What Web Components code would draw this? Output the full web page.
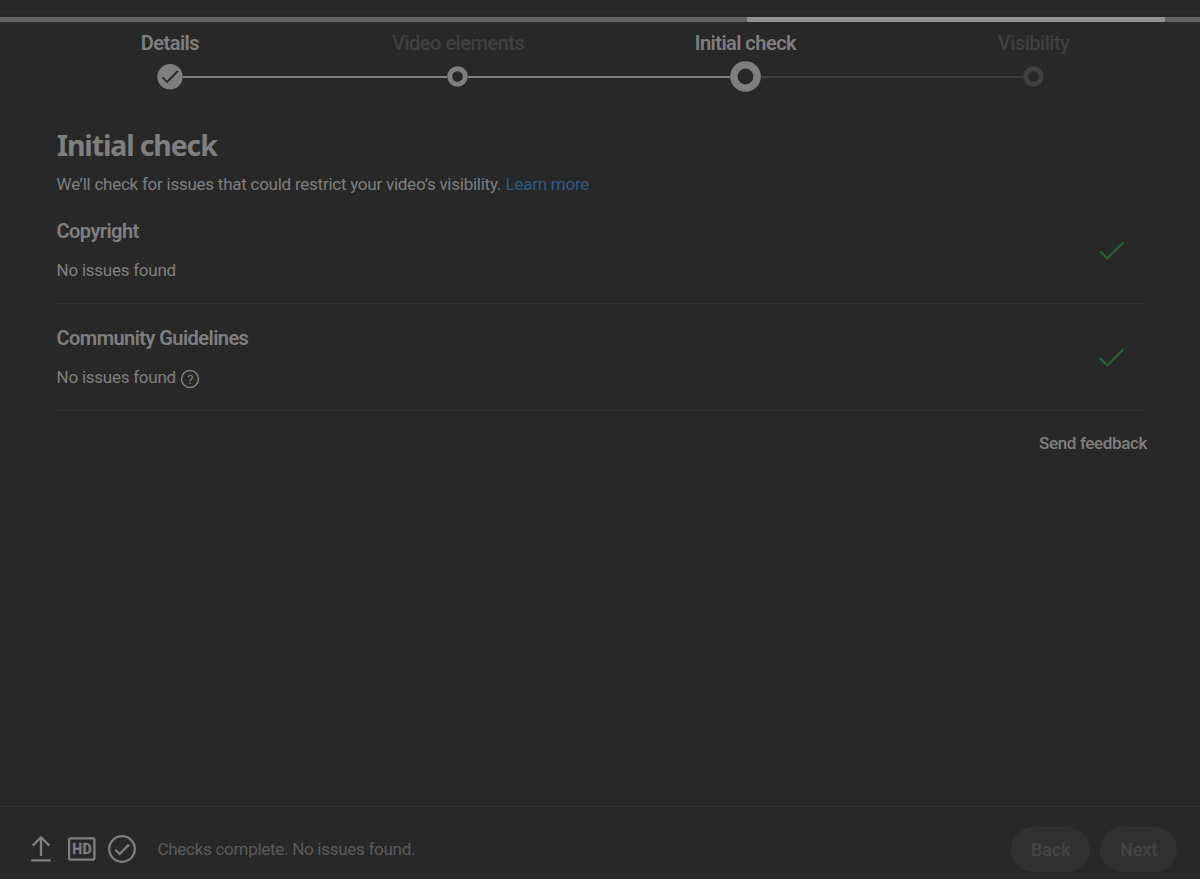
<!DOCTYPE html>
<html lang="en">
<head>
<meta charset="utf-8">
<title>Initial check</title>
<style>
  body {
    margin: 0;
    background: #282828;
    color: #7f7f7f;
    font-family: Roboto, "Liberation Sans", sans-serif;
    --line: #303030;
    --muted: #404040;
    --active: #7f7f7f;
  }
</style>
</head>
<body>
<upload-dialog>
  <upload-progress slot="top"></upload-progress>
  <step-list slot="top">
    <step-item state="done" label="Details"></step-item>
    <step-item state="visited" label="Video elements"></step-item>
    <step-item state="current" label="Initial check"></step-item>
    <step-item state="pending" label="Visibility"></step-item>
  </step-list>
  <checks-panel heading="Initial check">
    <span slot="intro">We’ll check for issues that could restrict your video’s visibility.</span>
    <check-row heading="Copyright">No issues found</check-row>
    <check-row heading="Community Guidelines" help>No issues found</check-row>
  </checks-panel>
  <dialog-footer slot="bottom">
    <span>Checks complete. No issues found.</span>
    <pill-button slot="actions">Back</pill-button>
    <pill-button slot="actions">Next</pill-button>
  </dialog-footer>
</upload-dialog>

<script>
// Shared base: renders styles() and template() once into an open shadow root.
class StudioElement extends HTMLElement {
  constructor() {
    super();
    this.attachShadow({ mode: 'open' });
  }

  connectedCallback() {
    this.shadowRoot.innerHTML = `<style>${this.styles()}</style>${this.template()}`;
  }

  styles() { return ''; }
  template() { return ''; }
}

class UploadDialog extends StudioElement {
  styles() {
    return `
      :host { display: flex; flex-direction: column; height: 879px; overflow: hidden; }
      main { flex: 1; min-height: 0; }
    `;
  }
  template() {
    return `
      <slot name="top"></slot>
      <main><slot></slot></main>
      <slot name="bottom"></slot>
    `;
  }
}

class UploadProgress extends StudioElement {
  styles() {
    return `
      :host { display: block; padding-top: 12px; flex: none; }
      .edge { height: 1px; background: #2e2e2e; margin-bottom: 4px; }
      .bar { height: 5px; display: flex; background: #636363; }
      .bar i { margin-left: 747px; width: 418px; background: #929292; }
    `;
  }
  template() { return '<div class="edge"></div><div class="bar"><i></i></div>'; }
}

class StepList extends StudioElement {
  styles() {
    return `
      :host { display: flex; flex: none; padding: 9px 23px 0 26px; }
      ::slotted(*) { flex: 1; }
    `;
  }
  template() { return '<slot></slot>'; }
}

// One step: label, then a track made of line - marker - line.
class StepItem extends StudioElement {
  styles() {
    return `
      :host {
        display: flex; flex-direction: column; align-items: stretch;
        font-size: 20px; line-height: 24px; text-align: center; color: var(--muted);
        --before: var(--active); --after: var(--active);
      }
      :host([state="done"]), :host([state="current"]) { color: var(--active); }
      :host([state="done"]) { --before: transparent; }
      :host([state="current"]) { --after: var(--muted); }
      :host([state="pending"]) { --before: var(--muted); --after: transparent; }
      .label { font-weight: 500; letter-spacing: -.48px; padding-left: 1px; white-space: nowrap; }
      :host([state="done"]) .label, :host([state="current"]) .label {
        font-weight: 600; letter-spacing: -.53px; padding-left: 0;
      }
      .track { display: flex; align-items: center; height: 31px; margin-top: 6px; }
      .line { flex: 1; height: 2px; background: var(--before); margin-top: 1px; }
      .line + svg + .line { background: var(--after); }
      svg { display: block; flex: none; }
    `;
  }
  marker() {
    switch (this.getAttribute('state')) {
      case 'done':
        return `<svg width="26" height="26" viewBox="0 0 26 26">
          <circle cx="13" cy="12.7" r="12.7" fill="#7f7f7f"/>
          <path d="M5.4 13.4l4.7 4.5L20.8 7" fill="none" stroke="#282828" stroke-width="1.9"/>
        </svg>`;
      case 'current':
        return `<svg width="31" height="31" viewBox="0 0 31 31">
          <circle cx="15.5" cy="15.5" r="11.6" fill="none" stroke="#7f7f7f" stroke-width="7.4"/>
        </svg>`;
      default: {
        const color = this.getAttribute('state') === 'pending' ? '#404040' : '#7f7f7f';
        return `<svg width="21" height="21" viewBox="0 0 21 21">
          <circle cx="10.5" cy="10.5" r="7.8" fill="none" stroke="${color}" stroke-width="5"/>
        </svg>`;
      }
    }
  }
  template() {
    return `
      <div class="label">${this.getAttribute('label')}</div>
      <div class="track"><div class="line"></div>${this.marker()}<div class="line"></div></div>
    `;
  }
}

class ChecksPanel extends StudioElement {
  styles() {
    return `
      :host {
        display: flex; flex-direction: column; padding: 35px 53px 0 56px;
        font-size: 17px; letter-spacing: -.25px;
      }
      h1 {
        margin: 0 0 0 1px; letter-spacing: -1.15px;
        font: 700 28.5px/36px "Noto Sans", "Open Sans", sans-serif;
      }
      p { margin: 9px 0 0 .6px; line-height: 24px; }
      a { color: #2b5a86; margin-left: 4.5px; text-decoration: none; }
      .rows { margin-top: 1px; }
      .feedback {
        align-self: flex-end; margin-top: 20px; line-height: 24px;
        font-weight: 500; letter-spacing: -.37px;
      }
    `;
  }
  template() {
    return `
      <h1>${this.getAttribute('heading')}</h1>
      <p><slot name="intro"></slot><a>Learn more</a></p>
      <div class="rows"><slot></slot></div>
      <div class="feedback">Send feedback</div>
    `;
  }
}

class CheckRow extends StudioElement {
  styles() {
    return `
      :host {
        display: flex; justify-content: space-between; box-sizing: border-box;
        height: 107px; padding: 22px 22px 0 0; border-bottom: 1px solid var(--line);
      }
      .text { padding-left: .6px; }
      h2 { margin: 0; font-size: 20px; line-height: 25px; font-weight: 600; letter-spacing: -.56px; }
      .result { display: flex; align-items: center; margin-top: 14px; line-height: 24px; }
      .help { margin: 3px 0 0 4px; }
      .check { margin-top: 20px; }
      svg { display: block; }
    `;
  }
  template() {
    const help = this.hasAttribute('help') ? `
      <svg class="help" width="20" height="20" viewBox="0 0 20 20">
        <circle cx="10" cy="10" r="8.5" fill="none" stroke="#7f7f7f" stroke-width="1.5"/>
        <text x="10" y="14.7" text-anchor="middle" font-size="13.5" fill="#7f7f7f">?</text>
      </svg>` : '';
    return `
      <div class="text">
        <h2>${this.getAttribute('heading')}</h2>
        <div class="result"><slot></slot>${help}</div>
      </div>
      <svg class="check" width="27" height="24" viewBox="0 0 27 24">
        <path d="M2 12.4l7.3 7L25.3 3.5" fill="none" stroke="#285f33" stroke-width="2.3"/>
      </svg>
    `;
  }
}

class DialogFooter extends StudioElement {
  styles() {
    return `
      :host {
        display: flex; align-items: center; box-sizing: border-box; flex: none;
        height: 73px; padding: 13px 23px 0 27px; border-top: 1px solid var(--line);
        font-size: 17px; letter-spacing: -.28px; color: #5a5a5a;
      }
      ::slotted(span) { margin-bottom: 2px; }
      .icons { display: flex; gap: 12.5px; margin: 0 21.5px 1px 0; }
      .actions { display: flex; gap: 10px; margin-left: auto; }
      svg { display: block; fill: none; stroke: #7f7f7f; stroke-width: 2.3; }
      text { fill: #7f7f7f; stroke: #7f7f7f; stroke-width: .3; font-weight: 700; }
    `;
  }
  template() {
    return `
      <div class="icons">
        <svg width="28" height="30" viewBox="0 0 28 30">
          <path d="M14 22V3.5M5.7 11.6L14 3.3l8.3 8.3M4.2 26.3h19.6"/>
        </svg>
        <svg width="28" height="30" viewBox="0 0 28 30">
          <rect x="1.1" y="4.4" width="25.3" height="21.2" rx="1"/>
          <text x="14" y="19.9" text-anchor="middle" font-size="14" letter-spacing=".3">HD</text>
        </svg>
        <svg width="28" height="30" viewBox="0 0 28 30">
          <circle cx="14" cy="15" r="12.8"/>
          <path d="M7.3 15.9l4.4 4.1 9.2-9.4"/>
        </svg>
      </div>
      <slot></slot>
      <div class="actions"><slot name="actions"></slot></div>
    `;
  }
}

class PillButton extends StudioElement {
  styles() {
    return `
      :host {
        display: block; height: 45px; line-height: 45px; padding: 0 20px;
        border-radius: 23px; background: #303030; color: #434343;
        font-size: 18px; font-weight: 600; letter-spacing: -.2px;
      }
    `;
  }
  template() { return '<slot></slot>'; }
}

customElements.define('upload-dialog', UploadDialog);
customElements.define('upload-progress', UploadProgress);
customElements.define('step-list', StepList);
customElements.define('step-item', StepItem);
customElements.define('checks-panel', ChecksPanel);
customElements.define('check-row', CheckRow);
customElements.define('dialog-footer', DialogFooter);
customElements.define('pill-button', PillButton);
</script>
</body>
</html>
